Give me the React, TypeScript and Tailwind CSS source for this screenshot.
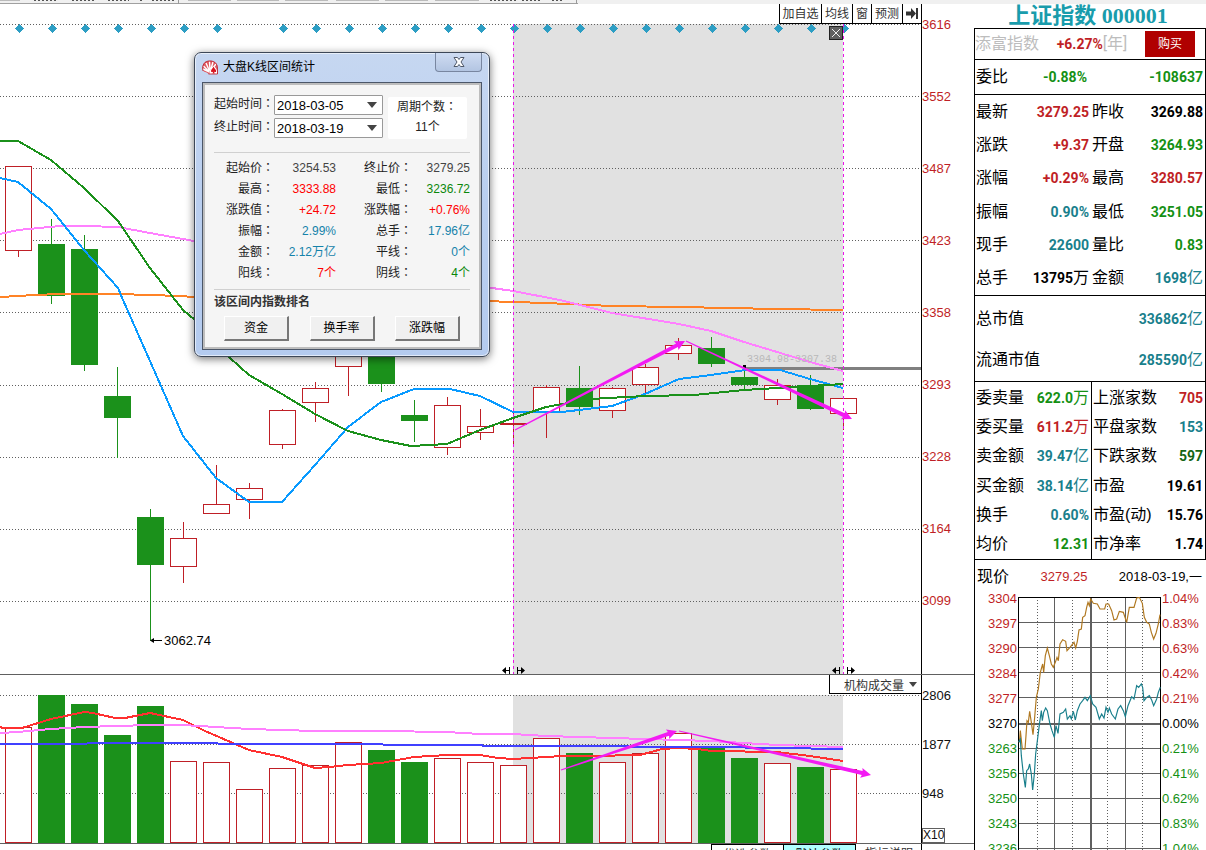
import React from "react";

const SANS = "font-['Liberation_Sans','Noto_Sans_CJK_SC',sans-serif]";
const NUM = "font-['Roboto','Noto_Sans_CJK_SC',sans-serif]";

const RED = "#bf1f26";
const GREEN = "#1b911b";

type Tone = "red" | "green" | "teal" | "black" | "forest";
const tones: Record<Tone, string> = {
  red: "text-[#bf1f26]",
  green: "text-[#149014]",
  teal: "text-[#197f8c]",
  black: "text-black",
  forest: "text-[#146414]",
};

// up, body top, body bottom, high, low, volume top
type Candle = [boolean, number, number, number, number, number];
const candles: Candle[] = [
  [true, 166, 251, 166, 257, 727],
  [false, 244, 296, 219, 304, 695],
  [false, 249, 365, 235, 371, 704],
  [false, 396, 418, 367, 458, 735],
  [false, 517, 565, 509, 641, 706],
  [true, 538, 567, 522, 583, 761],
  [true, 504, 514, 465, 514, 762],
  [true, 488, 500, 483, 519, 789],
  [true, 410, 445, 409, 449, 768],
  [true, 388, 403, 382, 422, 765],
  [true, 330, 367, 320, 396, 742],
  [false, 325, 384, 320, 392, 750],
  [false, 415, 421, 400, 442, 762],
  [true, 405, 448, 397, 455, 758],
  [true, 426, 433, 409, 440, 762],
  [true, 423, 425, 412, 444, 765],
  [true, 387, 412, 385, 438, 738],
  [false, 388, 407, 366, 415, 753],
  [true, 388, 411, 387, 418, 762],
  [true, 367, 385, 364, 394, 753],
  [true, 345, 354, 338, 360, 733],
  [false, 348, 364, 337, 367, 747],
  [false, 377, 385, 370, 390, 758],
  [true, 385, 400, 379, 405, 763],
  [false, 385, 409, 375, 410, 767],
  [true, 398, 414, 398, 430, 769],
];
const centre = (i: number) => 18 + 33 * i;

const priceGrid = [24, 96, 168, 240, 312, 385, 457, 529, 601];
const priceTicks = ["3616", "3552", "3487", "3423", "3358", "3293", "3228", "3164", "3099"];

function Arrow({ from, to }: { from: [number, number]; to: [number, number] }) {
  const dx = to[0] - from[0];
  const dy = to[1] - from[1];
  const len = Math.hypot(dx, dy);
  const u = [dx / len, dy / len];
  const n = [-u[1], u[0]];
  const at = (d: number, w: number) =>
    `${from[0] + u[0] * d + n[0] * w},${from[1] + u[1] * d + n[1] * w}`;
  const pts = [
    at(0, 0.6), at(len - 9, 2), at(len - 10, 5), at(len, 0),
    at(len - 10, -5), at(len - 9, -2), at(0, -0.6),
  ];
  return <polygon points={pts.join(" ")} fill="#f31bf3" />;
}

function Body({ x, top, bottom, up }: { x: number; top: number; bottom: number; up: boolean }) {
  return up && bottom - top > 2 ? (
    <rect x={x - 12.5} y={top + 0.5} width="26" height={bottom - top - 1} fill="#fff" stroke={RED} />
  ) : (
    <rect x={x - 13} y={top} width="27" height={bottom - top} fill={up ? RED : GREEN} />
  );
}

function Handles({ x }: { x: number }) {
  return (
    <g stroke="#000" fill="#000">
      <path d={`M${x - 3.5} 667v7M${x - 10} 670.5h6M${x + 4.5} 667v7M${x + 5} 670.5h6`} fill="none" />
      <path d={`M${x - 11} 670.5l4-3.5v7zM${x + 12} 670.5l-4-3.5v7z`} stroke="none" />
    </g>
  );
}

function PriceChart() {
  return (
    <svg className="block h-[670px] w-full" viewBox="0 4 921 670" preserveAspectRatio="none" role="img" aria-label="K线图">
      <g shapeRendering="crispEdges">
        <rect x="513" y="24" width="330" height="650" fill="#e1e1e1" />
        {priceGrid.map((y) => (
          <path key={y} d={`M0 ${y + 0.5}H921`} stroke="#606060" strokeDasharray="1 2" />
        ))}
        {candles.map((_, i) =>
          i === 7 ? null : (
            <path key={i} d={`M${centre(i) + 1.5} 24l4.5 4.5-4.5 4.5-4.5-4.5z`} fill="#2d9ec4" />
          ),
        )}
        <path d="M745 368.5H921" stroke="#808080" strokeWidth="3" />
        {candles.map(([up, top, bottom, high, low], i) => (
          <g key={i}>
            <path d={`M${centre(i) + 0.5} ${high}V${low}`} stroke={up ? RED : GREEN} />
            <Body x={centre(i)} top={top} bottom={bottom} up={up} />
          </g>
        ))}
        <g fill="none" strokeWidth="2">
          <polyline stroke="#ff8326" points="0,297 35,295 60,294 118,294 180,296 194,297 485,301 513,302 546,303 612,306 679,307 777,309 843,310" />
          <polyline stroke="#ff80ff" points="0,234 18,230 60,226 84,226 118,227 150,233 194,241 485,287 513,291 560,300 612,313 679,324 711,331 744,342 777,352 810,362 843,371" />
          <polyline stroke="#089aff" points="0,178 18,182 51,209 84,250 118,288 123,300 150,361 183,436 216,478 249,502 282,502 315,465 348,427 381,402 414,389 450,389 480,396 513,412 562,412 612,406 645,394 679,379 711,375 745,370 780,370 810,379 843,388" />
          <polyline stroke={GREEN} points="0,141 18,141 51,160 84,188 118,221 150,268 183,310 195,320 230,358 249,375 282,394 315,414 348,431 381,440 411,446 447,444 480,430 513,418 546,407 590,399 645,396 694,395 744,390 777,388 810,386 843,384" />
        </g>
        <path d="M513.5 24V674M843.5 24V674" stroke="#e815e8" strokeDasharray="3 3" />
        <path d="M151 640.5h11" stroke="#000" />
        <circle cx="744.5" cy="367" r="2" fill="#000" />
        <rect x="829.5" y="26.5" width="13" height="13" fill="#606060" stroke="#222" />
      </g>
      <path d="M832 29l8 8M840 29l-8 8" stroke="#eee" />
      <path d="M150 640.5l4-2.500v5z" fill="#000" />
      <Handles x={513} />
      <Handles x={843} />
      <Arrow from={[515, 430]} to={[685, 341]} />
      <Arrow from={[686, 341]} to={[852, 419]} />
      <text x="164" y="645" className={`text-[13px] ${SANS}`} fill="#000">3062.74</text>
      <text x="747" y="362" className="font-['Liberation_Mono',monospace] text-[10px]" fill="#b8b8b8">3304.98-3307.38</text>
    </svg>
  );
}

function VolumeChart() {
  return (
    <svg className="block h-[168px] w-full" viewBox="0 675 921 168" preserveAspectRatio="none" role="img" aria-label="成交量">
      <g shapeRendering="crispEdges">
        <rect x="513" y="695" width="330" height="148" fill="#e1e1e1" />
        {[695, 744, 793].map((y) => (
          <path key={y} d={`M0 ${y + 0.5}H921`} stroke="#606060" strokeDasharray="1 2" />
        ))}
        {candles.map((c, i) => (
          <Body key={i} x={centre(i)} top={c[5]} bottom={843} up={c[0]} />
        ))}
        <g fill="none" strokeWidth="2">
          <polyline stroke="#ff3030" points="0,727 3,728 22,728 51,719 84,712 93,713 115,718 125,718 150,713 183,720 205,731 249,750 282,757 315,768 330,767 348,765 381,763 414,757 447,755 480,755 498,758 513,759 546,757 562,756 590,756 640,755 662,749 678,748 697,749 712,751 777,752 810,756 843,761" />
          <polyline stroke="#ff80ff" points="0,733 18,732 51,729 84,727 150,725 183,725 216,727 249,729 315,731 381,731 447,732 480,734 513,734 546,736 612,738 679,740 711,741 744,743 777,745 843,747" />
          <polyline stroke="#4040ff" points="0,744 84,744 90,743 216,743 220,744 381,744 385,745 480,745 485,746 546,746 712,747 843,749" />
        </g>
      </g>
      <Arrow from={[561, 770]} to={[677, 731]} />
      <Arrow from={[679, 731]} to={[871, 775]} />
    </svg>
  );
}

function Caret({ className }: { className: string }) {
  return (
    <svg className={`pointer-events-none absolute ${className}`} viewBox="0 0 10 6" aria-hidden="true">
      <path d="M0 0h10L5 6z" fill="#444" />
    </svg>
  );
}

// Traditional Chinese faces centre the full-width colon in its box.
function Colon() {
  return <span lang="zh-TW" className="font-['Noto_Sans_CJK_TC',sans-serif] leading-none">：</span>;
}

function DateField({ label, id, value }: { label: string; id: string; value: string }) {
  return (
    <div className="flex h-[23px] items-start">
      <label htmlFor={id} className="w-[60px] whitespace-nowrap leading-[18px]">{label}<Colon /></label>
      <span className="relative block">
        <select id={id} defaultValue={value} className="block h-5 w-[109px] appearance-none rounded-[1px] border border-[#999] bg-white pl-0.5 text-[13px] text-black">
          <option>{value}</option>
        </select>
        <Caret className="right-[6px] top-[7px] h-[6px] w-[10px]" />
      </span>
    </div>
  );
}

const stats: [string, string, string][][] = [
  [["起始价", "3254.53", "text-[#444]"], ["终止价", "3279.25", "text-[#444]"]],
  [["最高", "3333.88", "text-[#f00]"], ["最低", "3236.72", "text-[#0a870a]"]],
  [["涨跌值", "+24.72", "text-[#f00]"], ["涨跌幅", "+0.76%", "text-[#f00]"]],
  [["振幅", "2.99%", "text-[#1482aa]"], ["总手", "17.96亿", "text-[#1482aa]"]],
  [["金额", "2.12万亿", "text-[#1482aa]"], ["平线", "0个", "text-[#1482aa]"]],
  [["阳线", "7个", "text-[#f00]"], ["阴线", "4个", "text-[#0a870a]"]],
];

function StatsDialog() {
  return (
    <section
      role="dialog"
      aria-labelledby="stats-title"
      className={`absolute left-[194px] top-[52px] w-[296px] rounded-[7px] border border-[#3d4757] bg-linear-to-b from-[#c6d7f1] via-[#b9ceef] to-[#b4cbef] px-[7px] pb-[6px] text-[12px] text-[#222] shadow-[0_2px_8px_rgba(0,0,0,0.55),inset_0_0_0_1px_rgba(255,255,255,0.6)] ${SANS}`}
    >
      <header className="flex h-[29px] items-start">
        <svg className="mt-[7px] h-4 w-4" viewBox="0 0 16 16" aria-hidden="true">
          <path d="M.5 9C0 4 3 1 6 1c4-1 9.500 1 9.500 6v7H6.500C5 11.500 1 13 .5 9z" fill="#e05a62" />
          <path d="M7.500 12L1 9M7.500 12L1.500 6M7.500 11L4 3M8 10L7.500 1.500M9 9L11 2M10 9L14 4" stroke="#fff" strokeWidth="1.400" />
          <path d="M1 11C-.5 5 3 .8 7.500 1c4.500-.3 8 2.500 8 7v6H6.500" fill="none" stroke="#b8202b" strokeWidth=".8" />
          <path d="M7.500 13.500c0-4 2-6 4-7.500 2.500 1.500 4 4 3.500 7.500z" fill="#fff" />
          <path d="M11.500 6.500C11 8.500 8.800 9.500 9 11.200c.3 1.200 1.600 1 2.200.3L10.500 13.500h2.200l-.7-2c.8.800 2 .8 2.200-.3C14.300 9.700 12 8.500 11.500 6.500z" fill="#d8141e" />
        </svg>
        <h2 id="stats-title" className="ml-[5px] mt-[5px] flex-1 leading-[18px] text-black">大盘K线区间统计</h2>
        <button aria-label="关闭" className="flex h-[19px] w-[47px] items-center justify-center rounded-b-[4px] border border-t-0 border-[#7886a0] bg-linear-to-b from-[#cfdcf2] to-[#b3c5e2]">
          <svg className="h-[10px] w-3" viewBox="0 0 12 10">
            <path d="M1 .5h3.500L6 2.500 7.500.500H11L8 5l3 4.500H7.500L6 7.500 4.500 9.500H1L4 5z" fill="#fff" stroke="#4f5869" />
          </svg>
        </button>
      </header>
      <div className="border border-[#4b5668] bg-[#f5f5f5] px-[11px] pb-2 shadow-[inset_0_0_0_2px_#bdbdbd]">
        <div className="flex justify-between pt-3">
          <div>
            <DateField label="起始时间" id="start" value="2018-03-05" />
            <DateField label="终止时间" id="end" value="2018-03-19" />
          </div>
          <div className="mr-[3px] mt-0.5 h-[42px] w-[79px] rounded-[2px] bg-white leading-5">
            <p className="whitespace-nowrap pl-[9px]">周期个数<Colon /></p>
            <p className="text-center">11个</p>
          </div>
        </div>
        <div className="mt-[11px] border-t border-[#d0d0d0] pt-1">
          {stats.map((row, r) => (
            <dl key={r} className="grid h-[21px] grid-cols-[60px_62px_76px_58px] items-center text-right leading-[18px]">
              {row.map(([k, v, tone]) => (
                <React.Fragment key={k}>
                  <dt className="whitespace-nowrap">{k}<Colon /></dt>
                  <dd className={`pt-px ${tone}`}>{v}</dd>
                </React.Fragment>
              ))}
            </dl>
          ))}
        </div>
        <div className="mt-1.5 border-t border-[#d0d0d0] pt-0.5">
          <h3 className="font-bold leading-5 text-[#333]">该区间内指数排名</h3>
          <div className="flex justify-between px-[10px] pt-1">
            {["资金", "换手率", "涨跌幅"].map((t) => (
              <button key={t} className="h-[25px] w-[65px] border-b-2 border-l border-r-2 border-t border-b-[#777] border-l-white border-r-[#777] border-t-white bg-[#f0f0f0] leading-5 text-black">
                {t}
              </button>
            ))}
          </div>
        </div>
      </div>
    </section>
  );
}

function Val({ v, tone }: { v: string; tone: Tone }) {
  const m = v.match(/^(.*?)([万亿]?)$/)!;
  return (
    <dd className={`flex items-center justify-end whitespace-nowrap text-[14px] font-bold ${NUM} ${tones[tone]}`}>
      {m[1]}
      {m[2] && <span className="text-[16px] font-normal">{m[2]}</span>}
    </dd>
  );
}

type Cell = [string, string, Tone];
const quotes: Cell[] = [
  ["最新", "3279.25", "red"], ["昨收", "3269.88", "black"],
  ["涨跌", "+9.37", "red"], ["开盘", "3264.93", "green"],
  ["涨幅", "+0.29%", "red"], ["最高", "3280.57", "red"],
  ["振幅", "0.90%", "teal"], ["最低", "3251.05", "green"],
  ["现手", "22600", "teal"], ["量比", "0.83", "green"],
  ["总手", "13795万", "black"], ["金额", "1698亿", "teal"],
];
const caps: Cell[] = [["总市值", "336862亿", "teal"], ["流通市值", "285590亿", "teal"]];
const orders: Cell[] = [
  ["委卖量", "622.0万", "green"], ["委买量", "611.2万", "red"], ["卖金额", "39.47亿", "teal"],
  ["买金额", "38.14亿", "teal"], ["换手", "0.60%", "teal"], ["均价", "12.31", "green"],
];
const breadth: Cell[] = [
  ["上涨家数", "705", "red"], ["平盘家数", "153", "teal"], ["下跌家数", "597", "forest"],
  ["市盈", "19.61", "black"], ["市盈(动)", "15.76", "black"], ["市净率", "1.74", "black"],
];

function Row({ cell }: { cell: Cell }) {
  return (
    <div className="flex items-center justify-between whitespace-nowrap pl-px pr-0.5">
      <dt>{cell[0]}</dt>
      <Val v={cell[1]} tone={cell[2]} />
    </div>
  );
}

const miniLeft = ["3304", "3297", "3290", "3284", "3277", "3270", "3263", "3256", "3250", "3243", "3236"];
const miniRight = ["1.04%", "0.83%", "0.63%", "0.42%", "0.21%", "0.00%", "0.21%", "0.41%", "0.62%", "0.83%", "1.04%"];
const miniTone = (i: number) => (i < 5 ? tones.red : i === 5 ? tones.black : tones.green);

function MiniChart() {
  return (
    <div className={`flex text-[13px] leading-[25px] ${SANS}`}>
      <ul className="w-[43px] pr-px pt-px text-right">
        {miniLeft.map((t, i) => <li key={i} className={miniTone(i)}>{t}</li>)}
      </ul>
      <svg className="mt-3 h-[253px] min-w-0 flex-1" viewBox="1018 598 144 253" preserveAspectRatio="none" role="img" aria-label="分时图">
        <g shapeRendering="crispEdges" fill="none">
          {[623, 648, 673, 698, 749, 774, 799, 824, 849].map((y) => (
            <path key={y} d={`M1018 ${y + 0.5}h143`} stroke="#606060" />
          ))}
          <path d="M1054.500 598V851M1125.500 598V851" stroke="#606060" />
          <path d="M1037.500 598V851M1072.500 598V851M1107.500 598V851M1142.500 598V851" stroke="#606060" strokeDasharray="1 2" />
          <path d="M1091 598V851M1018 724.500h143" stroke="#606060" strokeWidth="2" />
          <path d="M1018.500 851V598.500h142V851" stroke="#000" />
        </g>
        <g transform="translate(970 555) scale(0.33333)" fill="none" strokeWidth="3.500">
          <polyline stroke="#b07820" points="148,565 151,530 157,585 165,585 168,545 171,500 175,505 179,472 184,505 189,542 194,490 199,430 205,405 211,355 218,330 221,355 226,305 232,282 238,305 244,330 250,340 257,322 261,310 265,320 270,270 278,257 287,262 291,290 300,280 312,265 317,282 322,262 327,228 334,225 338,190 345,185 350,160 354,145 358,155 362,135 370,148 382,150 390,165 404,165 408,150 416,150 425,170 432,198 440,195 448,172 460,175 470,205 478,160 492,160 500,132 508,130 517,148 523,190 530,205 538,210 544,235 551,255 558,238 565,210 570,182" />
          <polyline stroke="#197f8c" points="146,565 151,555 154,605 160,660 166,700 170,650 175,645 179,630 184,660 188,708 193,660 197,600 204,545 209,505 214,470 217,500 221,475 227,462 232,470 240,510 246,530 253,550 258,515 264,538 270,480 280,475 287,465 292,495 300,485 304,495 310,472 316,498 322,470 330,450 338,440 345,430 352,440 361,425 368,450 378,460 388,495 395,480 402,492 408,460 414,475 418,462 425,480 436,495 444,465 452,455 460,470 466,488 474,455 485,428 492,435 500,395 506,400 514,390 518,400 522,440 530,430 538,425 545,438 551,455 560,435 565,415 571,400" />
        </g>
      </svg>
      <ul className="w-[44px] pt-px">
        {miniRight.map((t, i) => <li key={i} className={miniTone(i)}>{t}</li>)}
      </ul>
    </div>
  );
}

function QuotePanel() {
  return (
    <aside className="w-[232px] shrink-0 text-[16px] leading-5 text-black">
      <h1 className="h-6 pr-1 text-center font-['Liberation_Serif','Noto_Sans_CJK_SC',serif] text-[22px] font-bold leading-6 text-[#199cac]">
        上证指数 000001
      </h1>
      <div className="border border-b-0 border-black">
        <div className="flex h-[30px] items-center justify-between pr-[10px]">
          <span className="text-[#bdbdbd]">添富指数</span>
          <span className={`flex items-center text-[14px] font-bold text-[#bf1f26] ${NUM}`}>
            +6.27%<span className="text-[16px] font-normal text-[#bdbdbd]">[年]</span>
          </span>
          <button className="h-[26px] w-[50px] bg-[#b00000] text-[12px] text-white">购买</button>
        </div>
        <dl className="grid h-[35px] grid-cols-[114px_1fr] items-center border-t border-black">
          <Row cell={["委比", "-0.88%", "green"]} />
          <Row cell={["", "-108637", "green"]} />
        </dl>
        <dl className="grid h-[201px] grid-cols-[116px_1fr] grid-rows-6 border-t border-black">
          {quotes.map((c) => <Row key={c[0]} cell={c} />)}
        </dl>
        <dl className="grid h-[86px] grid-rows-2 border-t border-black pt-0.5">
          {caps.map((c) => <Row key={c[0]} cell={c} />)}
        </dl>
        <div className="grid h-[179px] grid-cols-[117px_1fr] border-y border-black">
          <dl className="grid grid-rows-6 border-r border-black pt-px">
            {orders.map((c) => <Row key={c[0]} cell={c} />)}
          </dl>
          <dl className="grid grid-rows-6 pt-px">
            {breadth.map((c) => <Row key={c[0]} cell={c} />)}
          </dl>
        </div>
      </div>
      <div className="border-l border-black">
        <div className={`flex h-[25px] items-center justify-between pl-0.5 pr-1 pt-2 text-[13px] ${SANS}`}>
          <span className="text-[16px]">现价</span>
          <span className="text-[#bf1f26]">3279.25</span>
          <span>2018-03-19,一</span>
        </div>
        <MiniChart />
      </div>
    </aside>
  );
}

export default function App() {
  return (
    <div className={`flex h-screen flex-col overflow-hidden bg-white ${SANS}`}>
      <div className="h-1 shrink-0 bg-[#f0f0f0]">
        <svg className="block h-1 w-[578px]" viewBox="0 0 578 4" aria-hidden="true" shapeRendering="crispEdges">
          <path d="M0 3.500H578" stroke="#a0a0a0" />
          <path d="M0 .5H20M188 .5h43M237 .5h42M285 .5h43M336 .5h43M385 .5h43M435 .5h44" stroke="#bbb" />
          <path d="M34 .5H58M72 .5H96M108 .5H129M140 .5h3M152 .5h24M490 .5h26M522 .5h18M552 .5h10" stroke="#555" strokeDasharray="2 2" />
          <path d="M178.500 0v4M576.500 0v4" stroke="#999" />
        </svg>
      </div>
      <div className="flex min-h-0 flex-1">
        <main className="min-w-0 flex-1">
          <div className="flex border-b border-[#606060]">
            <div className="relative min-w-0 flex-1">
              <PriceChart />
              <nav className="absolute right-0 top-0 flex h-5 border-b border-black bg-white text-[12px] leading-5 text-[#333]">
                <button className="w-[42px] border-l border-black">加自选</button>
                <button className="w-[31px] border-l border-black">均线</button>
                <button className="w-[19px] border-l border-black">窗</button>
                <button className="w-[31px] border-l border-black">预测</button>
                <button aria-label="跳到最新" className="flex w-[19px] items-center justify-center border-l border-black">
                  <svg className="h-[11px] w-3" viewBox="0 0 12 11">
                    <path d="M0 3.500h5V0l5 5.500L5 11V7.500H0z" fill="#333" />
                    <path d="M11 0v11" stroke="#333" strokeWidth="2" />
                  </svg>
                </button>
              </nav>
            </div>
            <ul className="w-[53px] border-l border-black pt-[13px] text-[13px] leading-4 text-[#bf1f26]">
              {priceTicks.map((t) => <li key={t} className="h-[72px]">{t}</li>)}
            </ul>
          </div>
          <div className="flex border-b border-[#606060]">
            <div className="relative min-w-0 flex-1">
              <VolumeChart />
              <div className="absolute right-0 top-0 border-b border-l border-black bg-white">
                <select aria-label="指标" className="block h-[18px] w-[91px] appearance-none bg-white pl-[14px] pt-0.5 text-[12px] text-[#333]">
                  <option>机构成交量</option>
                </select>
                <Caret className="right-1 top-[7px] h-[5px] w-2" />
              </div>
            </div>
            <div className="flex w-[53px] flex-col items-start border-l border-black text-[13px] leading-4 text-[#111]">
              <ul className="flex-1 pt-[13px]">
                <li className="h-[49px]">2806</li>
                <li className="h-[49px]">1877</li>
                <li>948</li>
              </ul>
              <span className="border border-[#606060] text-[12px] leading-[13px]">X10</span>
            </div>
          </div>
          <div className="flex">
            <div className="flex flex-1 justify-end pr-[5px] text-[12px] leading-5 text-[#333]">
              <button className="h-5 w-[73px] border border-black">优选参数</button>
              <button className="h-5 w-[72px] border border-l-0 border-black bg-[#b0ffff] text-black">默认参数</button>
              <button className="h-5 w-[60px] pl-[9px] text-left">指标说明</button>
            </div>
            <div className="h-5 w-[53px] border-l border-black" />
          </div>
        </main>
        <QuotePanel />
      </div>
      <StatsDialog />
    </div>
  );
}
